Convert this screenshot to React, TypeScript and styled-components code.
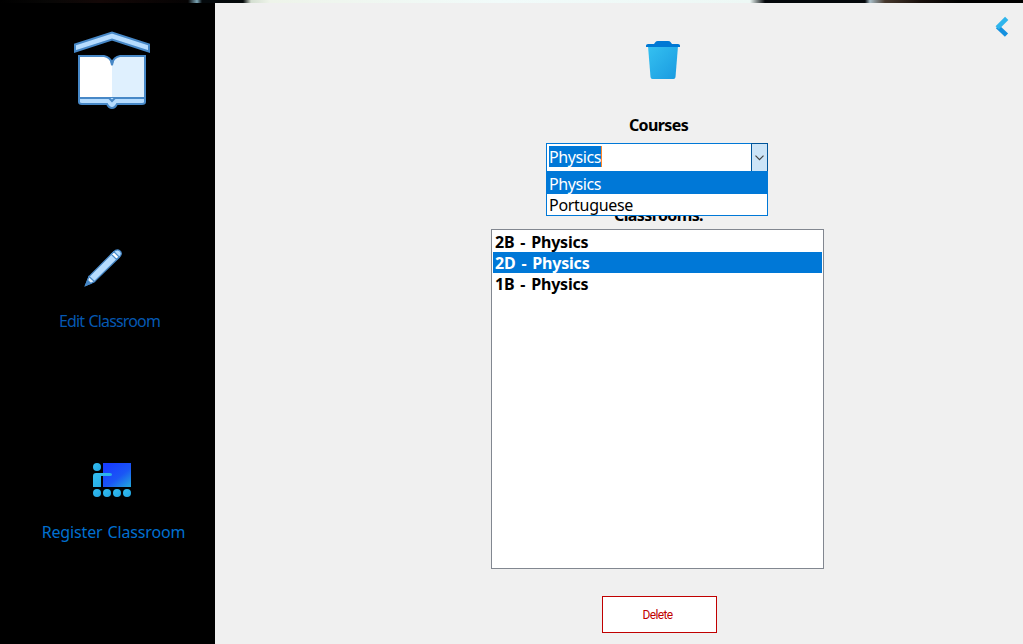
import React from 'react';
import styled, { createGlobalStyle } from 'styled-components';

const Global = createGlobalStyle`
  * { box-sizing: border-box; }
  body { margin: 0; overflow: hidden; background: #f0f0f0; font-family: "Noto Sans", "Open Sans", sans-serif; }
  svg { display: block; }
`;

const Window = styled.div`
  display: flex;
  flex-direction: column;
  width: 1023px;
  height: 644px;
`;

const Backdrop = styled.div`
  height: 3px;
  flex: none;
  background: linear-gradient(90deg, #000 0, #080706 50px, #140807 100px, #050303 188px, #7ba5b5 197px, #04090c 202px, #05090b 243px, #d3ded0 251px, #eef4ea 270px, #f1fbfa 500px, #edf8f5 750px, #04080b 765px, #04080b 865px, #a8bdc7 870px, #46382d 885px, #18100c 920px, #000 960px);
`;

const Body = styled.div`
  display: flex;
  flex: 1;
`;

const Sidebar = styled.nav`
  display: flex;
  flex-direction: column;
  width: 215px;
  background: #000;
  padding: 27px 0 0 9px;
  align-items: center;
`;

const Logo = styled.div`
  height: 211px;
`;

const NavItem = styled.a<{ $color: string; $spacing: number; $height: number }>`
  display: flex;
  flex-direction: column;
  align-items: center;
  height: ${p => p.$height}px;
  color: ${p => p.$color};
  font-size: 16px;
  line-height: 22px;
  letter-spacing: ${p => p.$spacing}px;
  word-spacing: 1px;
  white-space: nowrap;
`;

const NavIcon = styled.div<{ $shift?: number; $drop: number; $height: number }>`
  height: ${p => p.$height}px;
  padding-top: ${p => p.$drop}px;
  margin-left: ${p => p.$shift ?? 0}px;
`;

const NavLabel = styled.span<{ $inset: number }>`
  margin-right: ${p => p.$inset}px;
`;

const Main = styled.main`
  position: relative;
  flex: 1;
  display: flex;
  flex-direction: column;
  align-items: center;
  padding: 36px 0 0 77px;
`;

const BackButton = styled.button`
  position: absolute;
  top: 13px;
  right: 14px;
  padding: 0;
  border: 0;
  background: none;
`;

const TrashIcon = styled.div`
  height: 75px;
  margin-left: 11px;
`;

const Heading = styled.h2`
  margin: 0 0 0 2px;
  height: 22px;
  font-size: 16px;
  line-height: 22px;
  font-weight: 700;
  letter-spacing: -0.6px;
  color: #000;
`;

const Combo = styled.div`
  position: relative;
  display: flex;
  width: 222px;
  height: 29px;
  margin: 7px 1px 0 0;
  border: 1px solid #0078d7;
  background: #fff;
`;

const ComboValue = styled.div`
  flex: 1;
  padding: 2px 0 0 2px;
  font-size: 16px;
  line-height: 22px;
`;

const Selection = styled.span`
  display: inline-block;
  width: 53px;
  height: 21px;
  background: #0078d7;
  border-right: 1px solid #ff8728;
  color: #fff;
  letter-spacing: -0.4px;
`;

const ComboArrow = styled.div`
  display: flex;
  align-items: center;
  justify-content: center;
  width: 17px;
  height: 29px;
  margin: -1px -1px 0 0;
  border: 1px solid #005499;
  background: #cce4f7;
`;

const Menu = styled.ul`
  position: absolute;
  top: 27px;
  left: -1px;
  width: 222px;
  height: 45px;
  margin: 0;
  padding: 0;
  border: 1px solid #0078d7;
  background: #fff;
  list-style: none;
  overflow: hidden;
`;

const Option = styled.li<{ $active?: boolean; $spacing: number }>`
  height: ${p => (p.$active ? 22 : 21)}px;
  padding-left: 2px;
  font-size: 16px;
  line-height: ${p => (p.$active ? 24 : 22)}px;
  letter-spacing: ${p => p.$spacing}px;
  background: ${p => (p.$active ? '#0078d7' : '#fff')};
  color: ${p => (p.$active ? '#fff' : '#000')};
`;

const ClassroomsHeading = styled(Heading)`
  margin-top: 32px;
`;

const List = styled.ul`
  width: 333px;
  height: 340px;
  margin: 3px 0 27px;
  padding: 1px;
  border: 1px solid #828790;
  background: #fff;
  list-style: none;
`;

const Row = styled.li<{ $active?: boolean }>`
  height: 21px;
  padding-left: 2px;
  font-size: 16px;
  line-height: 23px;
  font-weight: 700;
  letter-spacing: -0.2px;
  word-spacing: 2px;
  background: ${p => (p.$active ? '#0078d7' : 'transparent')};
  color: ${p => (p.$active ? '#fff' : '#000')};
`;

const DeleteButton = styled.button`
  width: 115px;
  height: 37px;
  margin-left: 3px;
  padding: 1px 3px 0 0;
  border: 1px solid #c00000;
  background: #fff;
  color: #c00000;
  font: 12px Roboto, "Liberation Sans", sans-serif;
  letter-spacing: -0.6px;
`;

const classrooms = ['2B - Physics', '2D - Physics', '1B - Physics'];

const SchoolLogo = () => (
  <svg width="78" height="80" viewBox="0 0 78 80" stroke="#4788c7" strokeWidth="2">
    <path d="M2 14.5 39 2.5 76 14.5V21.5L39 9.5 2 21.5Z" fill="#b6dcfe" />
    <path d="M6 67H72V72Q72 74 69 74H44Q42 78 39 78T34 74H9Q6 74 6 72Z" fill="#b6dcfe" />
    <path d="M6 26H32Q39 27 39 34V67H6Z" fill="#fff" stroke="none" />
    <path d="M72 26H46Q39 27 39 34V67H72Z" fill="#dff0fe" stroke="none" />
    <path d="M32 25Q38 27 39 35Q40 27 46 25Z" fill="#000" stroke="none" />
    <path d="M6 68V26H31Q37 27 39 33Q41 27 47 26H72V68M6 68H36L39 71 42 68H72" fill="none" />
    <path d="M38 31 39 35 40 31" fill="none" />
  </svg>
);

const Pencil = () => (
  <svg width="38" height="38" viewBox="0 0 38 38" stroke="#4788c7" strokeWidth="1.2">
    <path d="M1.5 36.5 5 27.5 29.5 3Q33-.5 36 2T35 8.5L10.5 32.5Z" fill="#b6dcfe" />
    <path d="M5 27.5 10.5 32.5 6.5 34.5 3.5 31.5Z" fill="#dff0fe" />
    <path d="M27.3 5.2 30 2.8 35 7.8 32.5 10.5Z" fill="#fff" />
    <path d="M1.5 36.5 3.5 31.5 6.5 34.5Z" fill="#4788c7" />
  </svg>
);

const Classroom = () => (
  <svg width="39" height="36" viewBox="0 0 39 36">
    <defs>
      <linearGradient id="board" x1="0.2" y1="0.1" x2="1" y2="1">
        <stop stopColor="#183eff" />
        <stop offset="0.5" stopColor="#1a56f5" />
        <stop offset="1" stopColor="#22a9dc" />
      </linearGradient>
      <linearGradient id="person" x2="1" y2="1">
        <stop stopColor="#33bef0" />
        <stop offset="1" stopColor="#22a5e2" />
      </linearGradient>
    </defs>
    <path d="M10 1H38V25H10Z" fill="url(#board)" />
    <g fill="url(#person)">
      <circle cx="4" cy="5" r="4" />
      <path d="M0 25V14Q0 11 3 11H17Q19 11 19 12.5T17 14H8V25Z" />
      {[4, 14, 24, 34].map(x => <circle key={x} cx={x} cy="31" r="4" />)}
    </g>
  </svg>
);

const Trash = () => (
  <svg width="34" height="40" viewBox="0 0 34 40">
    <defs>
      <linearGradient id="bin" x2="1" y2="1">
        <stop stopColor="#35c1f1" />
        <stop offset="1" stopColor="#199ae0" />
      </linearGradient>
    </defs>
    <path d="M2 7H32L29.5 38Q29.3 40 27.5 40H6.5Q4.7 40 4.5 38Z" fill="url(#bin)" />
    <path d="M0 8V6.5Q0 5 2 5H8L9.5 3Q10 2 12 2H22Q24 2 24.5 3L26 5H32Q34 5 34 6.5V8Z" fill="#0078d4" />
  </svg>
);

const BackIcon = () => (
  <svg width="15" height="22" viewBox="0 0 15 22" fill="none" strokeWidth="4.6">
    <path d="M12.5 19.2 3.5 10.7" stroke="#1490df" />
    <path d="M12.7 2.3 3.2 11.8" stroke="#2fb5ec" />
  </svg>
);

export default function App() {
  return (
    <Window>
      <Global />
      <Backdrop />
      <Body>
        <Sidebar>
          <Logo><SchoolLogo /></Logo>
          <NavItem $color="#0558b2" $spacing={-0.85} $height={212}>
            <NavIcon $shift={-18} $drop={8} $height={69}><Pencil /></NavIcon>
            <NavLabel $inset={5}>Edit Classroom</NavLabel>
          </NavItem>
          <NavItem $color="#0070d0" $spacing={-0.15} $height={100}>
            <NavIcon $shift={1} $drop={9} $height={68}><Classroom /></NavIcon>
            <NavLabel $inset={-3}>Register Classroom</NavLabel>
          </NavItem>
        </Sidebar>
        <Main>
          <BackButton aria-label="Back"><BackIcon /></BackButton>
          <TrashIcon><Trash /></TrashIcon>
          <Heading>Courses</Heading>
          <Combo>
            <ComboValue><Selection>Physics</Selection></ComboValue>
            <ComboArrow>
              <svg width="9" height="6" viewBox="0 0 9 6" fill="none" stroke="#444" strokeWidth="1.2"><path d="M.5.7 4.5 4.7 8.5.7" /></svg>
            </ComboArrow>
            <Menu>
              <Option $active $spacing={-0.4}>Physics</Option>
              <Option $spacing={-0.3}>Portuguese</Option>
            </Menu>
          </Combo>
          <ClassroomsHeading>Classrooms:</ClassroomsHeading>
          <List>
            {classrooms.map((name, i) => <Row key={name} $active={i === 1}>{name}</Row>)}
          </List>
          <DeleteButton>Delete</DeleteButton>
        </Main>
      </Body>
    </Window>
  );
}
